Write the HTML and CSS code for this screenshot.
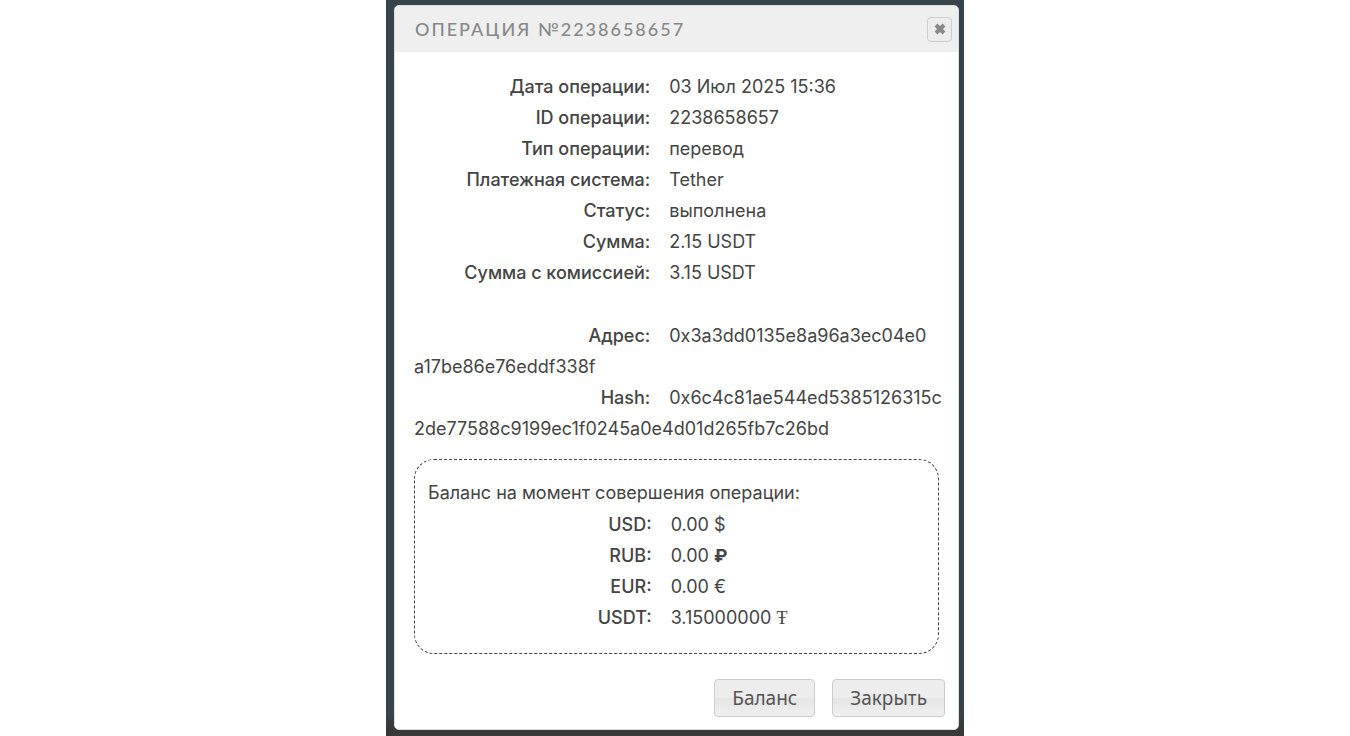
FILE: index.html
```
<!DOCTYPE html>
<html lang="ru">
<head>
    <meta charset="UTF-8">
    <meta name="viewport" content="width=device-width, initial-scale=1.0">
    <title>Операция №2238658657</title>
    <link rel="stylesheet" href="styles.css">
</head>
<body>

<div class="overlay">
    <div class="dialog" role="dialog" aria-labelledby="dialogTitle">
        <div class="dialog-header">
            <h1 class="dialog-title" id="dialogTitle">ОПЕРАЦИЯ №2238658657</h1>
            <button class="close" type="button" aria-label="Закрыть окно">
                <svg width="14" height="14" viewBox="0 0 14 14"><path d="M3 3 L11 11 M11 3 L3 11"/></svg>
            </button>
        </div>

        <div class="dialog-content">
            <div class="row"><b class="label">Дата операции:</b>03 Июл 2025 15:36</div>
            <div class="row"><b class="label">ID операции:</b>2238658657</div>
            <div class="row"><b class="label">Тип операции:</b>перевод</div>
            <div class="row"><b class="label">Платежная система:</b>Tether</div>
            <div class="row"><b class="label">Статус:</b>выполнена</div>
            <div class="row"><b class="label">Сумма:</b>2.15 USDT</div>
            <div class="row"><b class="label">Сумма с комиссией:</b>3.15 USDT</div>

            <div class="crypto">
                <div class="row"><b class="label">Адрес:</b>0x3a3dd0135e8a96a3ec04e0<br>a17be86e76eddf338f</div>
                <div class="row"><b class="label">Hash:</b>0x6c4c81ae544ed5385126315c<br>2de77588c9199ec1f0245a0e4d01d265fb7c26bd</div>
            </div>

            <div class="balance">
                <div class="balance-title">Баланс на момент совершения операции:</div>
                <div class="row"><b class="label">USD:</b>0.00 $</div>
                <div class="row"><b class="label">RUB:</b>0.00 <b>₽</b></div>
                <div class="row"><b class="label">EUR:</b>0.00 €</div>
                <div class="row"><b class="label">USDT:</b>3.15000000 <span class="tether">Ŧ</span></div>
            </div>
        </div>

        <div class="dialog-buttons">
            <button class="button" type="button">Баланс</button>
            <button class="button" type="button">Закрыть</button>
        </div>
    </div>
</div>

</body>
</html>
```

FILE: styles.css
```
* {
    box-sizing: border-box;
}

body {
    margin: 0;
    background-color: #fff;
    color: #444;
    font-family: Inter, "Noto Sans", sans-serif;
    font-size: 18px;
    line-height: 31px;
}

.overlay {
    max-width: 578px;
    min-height: 100vh;
    margin: 0 auto;
    padding: 5px 5px 6px 8px;
    background: linear-gradient(#37444b, #37444b 97%, #383838 99%);
}

.dialog {
    background-color: #fff;
    border: 1px solid #ddd;
    border-radius: 5px;
    overflow: hidden;
}

.dialog-header {
    display: flex;
    align-items: center;
    justify-content: space-between;
    padding: 7px 6px 7px 20px;
    background-color: #efefef;
}

.dialog-title {
    margin: 0;
    color: #888;
    font-family: Lato, sans-serif;
    font-size: 18px;
    font-weight: 500;
    letter-spacing: 2px;
    line-height: 32px;
}

.close {
    display: flex;
    align-items: center;
    justify-content: center;
    width: 25px;
    height: 25px;
    padding: 0;
    background-color: #ededed;
    border: 1px solid #ccc;
    border-radius: 4px;
}

.close svg {
    flex: none;
    fill: none;
    stroke: #888;
    stroke-width: 4;
}

.dialog-content {
    padding: 19px 19px 0;
}

.row {
    white-space: nowrap;
}

.label {
    display: inline-block;
    width: 45%;
    margin-right: 19px;
    font-weight: 500;
    text-align: right;
}

.crypto {
    margin-top: 32px;
}

.balance {
    margin-top: 15px;
    padding: 17px 13px 19px;
    border: 1px dashed #444;
    border-radius: 20px;
}

.balance-title {
    margin-bottom: 1px;
}

.tether {
    font-family: "Liberation Serif", serif;
}

.dialog-buttons {
    display: flex;
    justify-content: flex-end;
    gap: 17px;
    padding: 25px 13px 12px;
}

.button {
    padding: 0 17px;
    background: linear-gradient(#ededed 50%, #e5e5e5 50%, #f0f0f0);
    border: 1px solid #ccc;
    border-radius: 4px;
    color: #555;
    font-family: "Noto Sans", sans-serif;
    font-size: 19px;
    line-height: 36px;
}
```
